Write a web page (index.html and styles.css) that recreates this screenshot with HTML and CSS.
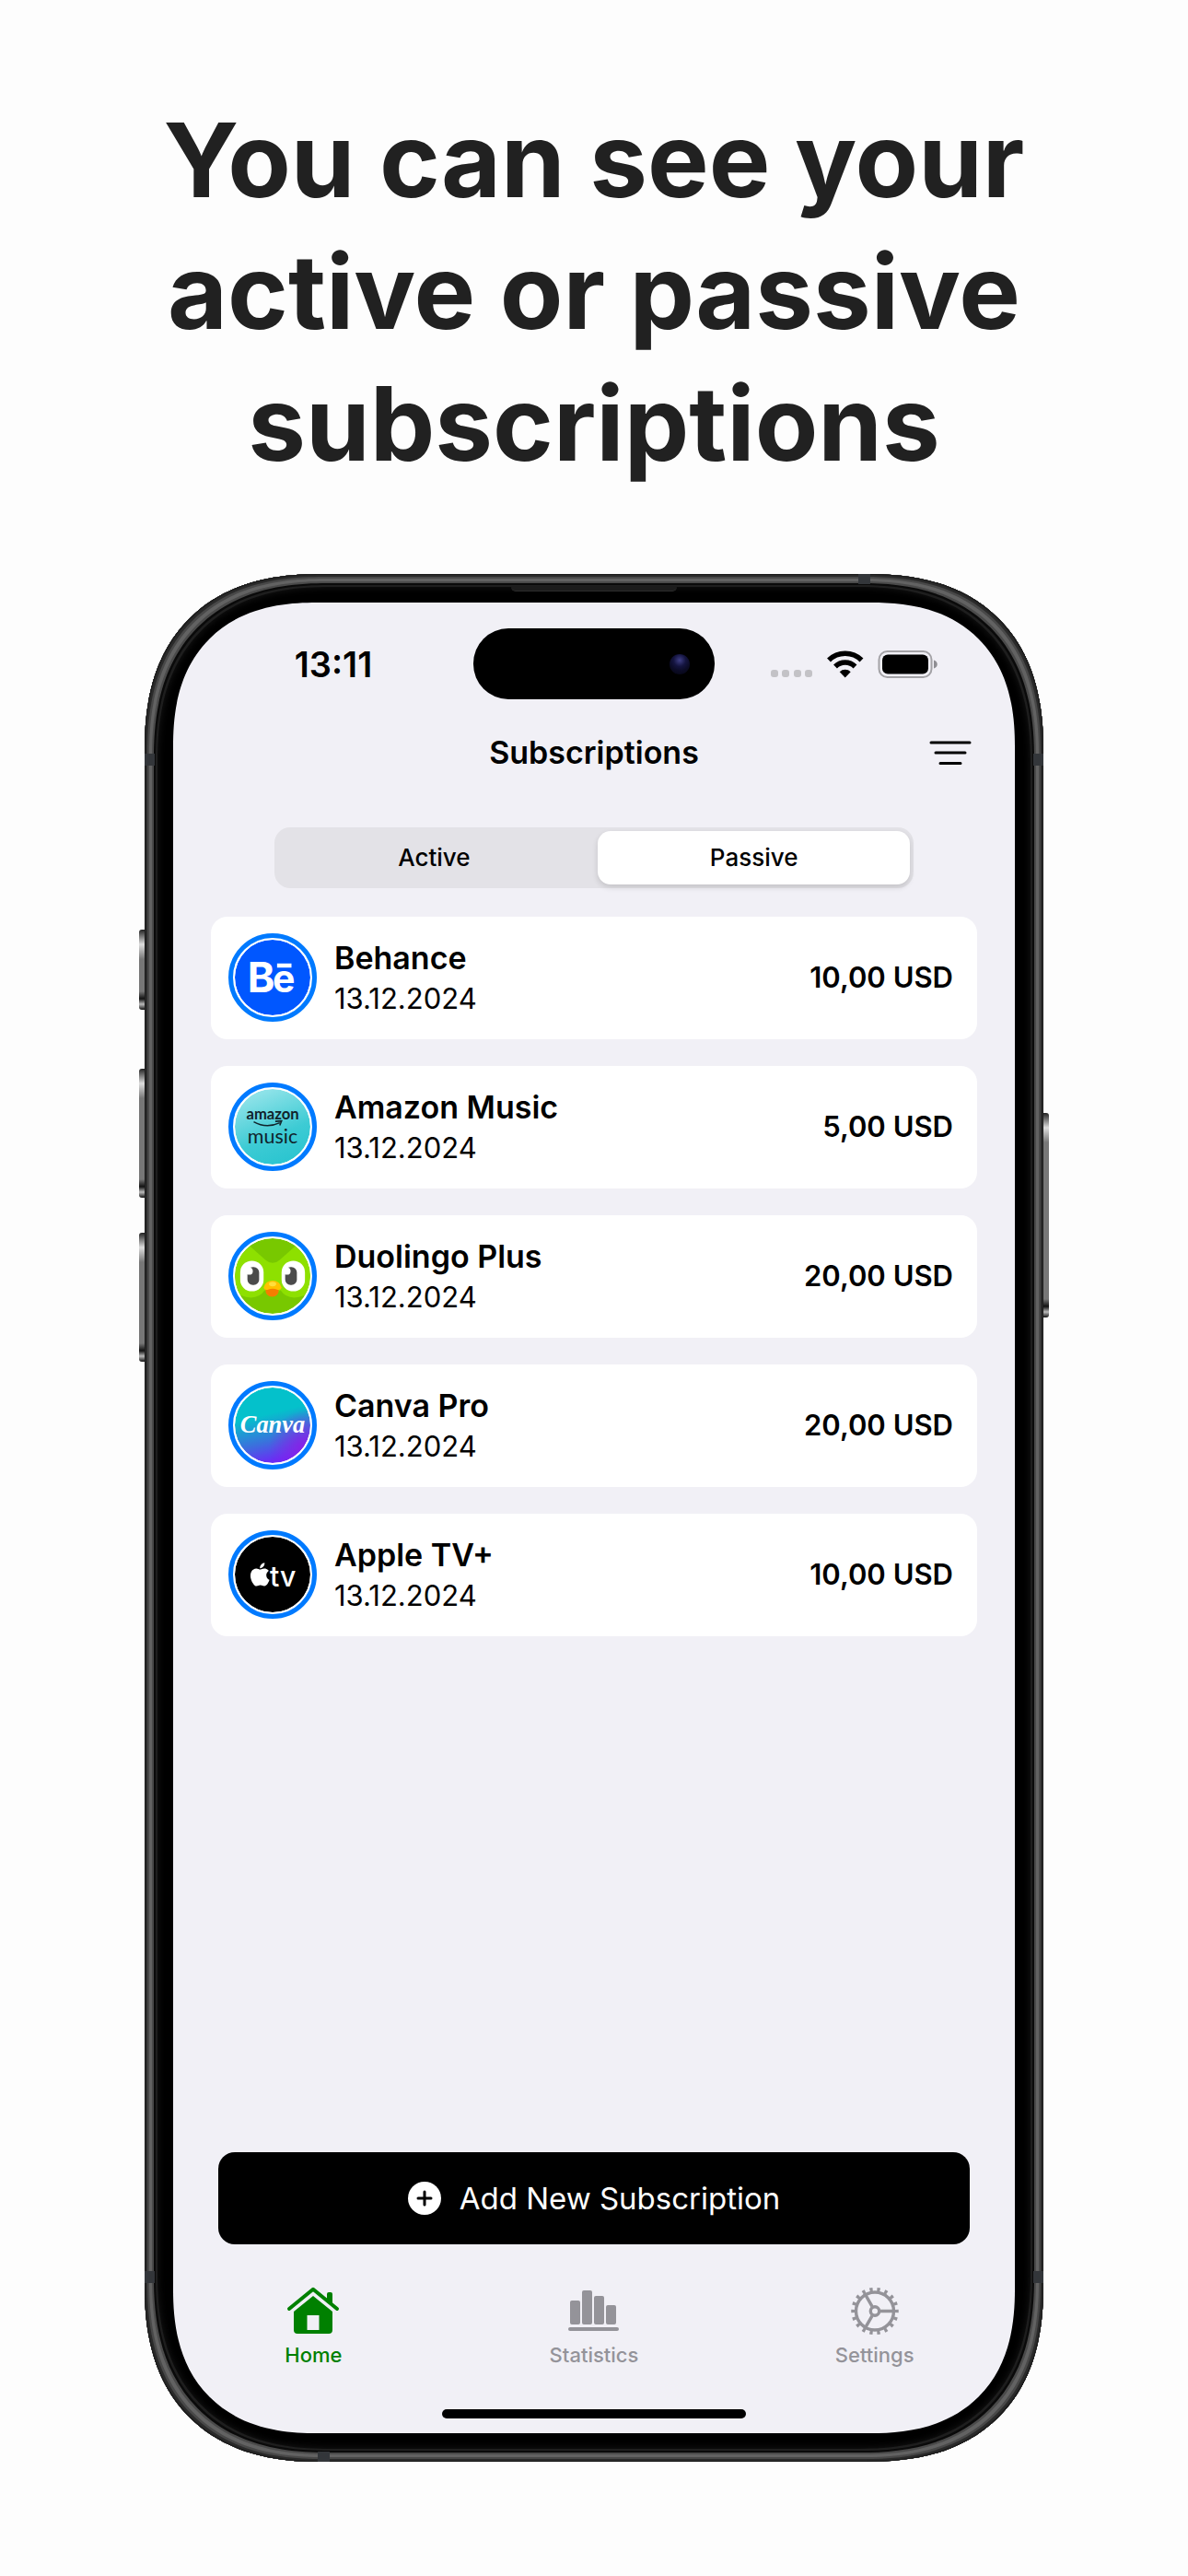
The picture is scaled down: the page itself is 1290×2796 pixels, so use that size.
FILE: index.html
```html
<!DOCTYPE html>
<html lang="en">
<head>
    <meta charset="UTF-8">
    <meta name="viewport" content="width=device-width, initial-scale=1">
    <title>Subscriptions</title>
    <link rel="stylesheet" href="styles.css">
</head>
<body>
    <h1 class="headline">You can see your<br>active or passive<br>subscriptions</h1>

    <div class="phone">
        <span class="side side-action"></span>
        <span class="side side-up"></span>
        <span class="side side-down"></span>
        <span class="side side-power"></span>
        <span class="band band-left-top"></span>
        <span class="band band-left-bottom"></span>
        <span class="band band-right-top"></span>
        <span class="band band-right-bottom"></span>
        <span class="band band-top"></span>
        <span class="band band-bottom"></span>
        <span class="speaker"></span>

        <main class="screen">
            <div class="status-bar">
                <span class="time">13:11</span>
                <div class="island"><span class="lens"></span></div>
                <svg class="status-icons" width="184" height="32" viewBox="0 0 184 32">
                    <g fill="#c3c2c6">
                        <rect x="0" y="22" width="8" height="8" rx="3"/>
                        <rect x="12" y="22" width="8" height="8" rx="3"/>
                        <rect x="25" y="22" width="8" height="8" rx="3"/>
                        <rect x="37" y="22" width="8" height="8" rx="3"/>
                    </g>
                    <g fill="none" stroke="#000" stroke-width="5.6">
                        <path d="M63 11.5a25.500 25.500 0 0 1 35.500 0"/>
                        <path d="M70 18.400a15.500 15.500 0 0 1 21.500 0"/>
                    </g>
                    <path d="M80.700 30.500l-6-6.300a8.700 8.700 0 0 1 12 0z"/>
                    <rect x="117.500" y="2" width="57" height="28" rx="9" fill="none" stroke="#a3a2a6" stroke-width="2"/>
                    <rect x="121" y="5.500" width="50" height="21" rx="6"/>
                    <path d="M177 11.500c5 1 5 8 0 9z" fill="#8f8e93"/>
                </svg>
            </div>

            <header class="nav-bar">
                <h2>Subscriptions</h2>
                <button class="filter" type="button" aria-label="Filter">
                    <svg width="46" height="28" viewBox="0 0 46 28" fill="none" stroke="#000" stroke-width="3" stroke-linecap="round">
                        <path d="M2 3h42M7 14h32M12 25.500h22"/>
                    </svg>
                </button>
            </header>

            <form class="segmented">
                <input type="radio" name="state" id="active">
                <label for="active">Active</label>
                <input type="radio" name="state" id="passive" checked>
                <label for="passive">Passive</label>
            </form>

            <ul class="list">
                <li class="card">
                    <svg class="logo" viewBox="0 0 84 84">
                        <circle cx="42" cy="42" r="42" fill="#0057ff"/>
                        <text x="14" y="58" font-size="46" font-weight="700">B</text>
                        <text x="42" y="58" font-size="42" font-weight="700">e</text>
                        <path d="M47 26.500h16v4.500H47z" fill="#fff"/>
                    </svg>
                    <div class="info">
                        <span class="name">Behance</span>
                        <span class="date">13.12.2024</span>
                    </div>
                    <span class="price">10,00 USD</span>
                </li>
                <li class="card">
                    <svg class="logo" viewBox="0 0 84 84">
                        <defs>
                            <linearGradient id="music" x1="0.200" y1="0" x2="0.600" y2="1">
                                <stop offset="0.100" stop-color="#8de2e8"/>
                                <stop offset="0.650" stop-color="#3dcbd4"/>
                                <stop offset="1" stop-color="#2bc5d0"/>
                            </linearGradient>
                        </defs>
                        <circle cx="42" cy="42" r="42" fill="url(#music)"/>
                        <text class="lato dark" x="42" y="34" font-size="17" font-weight="700" text-anchor="middle">amazon</text>
                        <path d="M21 36.500q14 8 29 1M45 36l7-.5-2 5" fill="none" stroke="#10232b" stroke-width="1.600"/>
                        <text class="lato dark" x="42" y="60" font-size="22" text-anchor="middle">music</text>
                    </svg>
                    <div class="info">
                        <span class="name">Amazon Music</span>
                        <span class="date">13.12.2024</span>
                    </div>
                    <span class="price">5,00 USD</span>
                </li>
                <li class="card">
                    <svg class="logo" viewBox="0 0 84 84">
                        <defs>
                            <clipPath id="round"><circle cx="42" cy="42" r="42"/></clipPath>
                        </defs>
                        <g clip-path="url(#round)">
                            <path d="M0 0h84v84H0z" fill="#78c800"/>
                            <path d="M0 22l17-13 17 15q8 7 16 0L67 9l17 13v36q-6 8-18 8-10 0-15-8-9 6-18 0-5 8-15 8Q6 66 0 58z" fill="#8ee000"/>
                            <rect x="6" y="25" width="26" height="34" rx="13" fill="#fff"/>
                            <rect x="52" y="25" width="26" height="34" rx="13" fill="#fff"/>
                            <rect x="14" y="32" width="13" height="20" rx="6" fill="#4b4b4b"/>
                            <rect x="56" y="32" width="13" height="20" rx="6" fill="#4b4b4b"/>
                            <circle cx="16" cy="36.500" r="4" fill="#fff"/>
                            <circle cx="58" cy="36.500" r="4" fill="#fff"/>
                            <path d="M34 56q8-6 15 0 0 9-7.500 9T34 56z" fill="#f47d00"/>
                            <path d="M32 55q2-8 10-8t10 8q-1 3-5 2-5-2-10 0-4 1-5-2z" fill="#ffc200"/>
                            <ellipse cx="42" cy="51" rx="4" ry="2.500" fill="#ffde3d"/>
                        </g>
                    </svg>
                    <div class="info">
                        <span class="name">Duolingo Plus</span>
                        <span class="date">13.12.2024</span>
                    </div>
                    <span class="price">20,00 USD</span>
                </li>
                <li class="card">
                    <svg class="logo" viewBox="0 0 84 84">
                        <defs>
                            <linearGradient id="canva" x1="0.350" y1="0" x2="0.600" y2="1">
                                <stop offset="0.350" stop-color="#04c1cb"/>
                                <stop offset="0.700" stop-color="#3b70dd"/>
                                <stop offset="0.950" stop-color="#6a2cf5"/>
                            </linearGradient>
                            <radialGradient id="violet" cx="0.950" cy="0.800" r="0.500">
                                <stop offset="0" stop-color="#8a1fe6"/>
                                <stop offset="1" stop-color="#8a1fe6" stop-opacity="0"/>
                            </radialGradient>
                        </defs>
                        <circle cx="42" cy="42" r="42" fill="url(#canva)"/>
                        <circle cx="42" cy="42" r="42" fill="url(#violet)"/>
                        <text class="script" x="42" y="50" font-size="27" font-weight="700" text-anchor="middle">Canva</text>
                    </svg>
                    <div class="info">
                        <span class="name">Canva Pro</span>
                        <span class="date">13.12.2024</span>
                    </div>
                    <span class="price">20,00 USD</span>
                </li>
                <li class="card">
                    <svg class="logo" viewBox="0 0 84 84">
                        <circle cx="42" cy="42" r="42"/>
                        <path transform="translate(15 29) scale(1.080)" fill="#fff" d="M12.152 6.896c-.948 0-2.415-1.078-3.960-1.040-2.040.027-3.910 1.183-4.961 3.014-2.117 3.675-.546 9.103 1.519 12.090 1.013 1.454 2.208 3.090 3.792 3.039 1.520-.065 2.090-.987 3.935-.987 1.831 0 2.350.987 3.960.948 1.637-.026 2.676-1.480 3.676-2.948 1.156-1.688 1.636-3.325 1.662-3.415-.039-.013-3.182-1.221-3.220-4.857-.026-3.040 2.480-4.494 2.597-4.559-1.429-2.090-3.623-2.324-4.390-2.376-2-.156-3.675 1.090-4.610 1.090zM15.530 3.830c.843-1.012 1.400-2.427 1.245-3.830-1.207.052-2.662.805-3.532 1.818-.780.896-1.454 2.338-1.273 3.714 1.338.104 2.715-.688 3.559-1.701"/>
                        <text x="39" y="55" font-size="31" font-weight="500">tv</text>
                    </svg>
                    <div class="info">
                        <span class="name">Apple TV+</span>
                        <span class="date">13.12.2024</span>
                    </div>
                    <span class="price">10,00 USD</span>
                </li>
            </ul>

            <button class="add" type="button">
                <svg width="36" height="36" viewBox="0 0 36 36">
                    <circle cx="18" cy="18" r="18" fill="#fff"/>
                    <path d="M18 11v14M11 18h14" stroke="#000" stroke-width="3" stroke-linecap="round"/>
                </svg>
                Add New Subscription
            </button>

            <nav class="tabs">
                <a class="tab current" href="#home">
                    <svg width="58" height="54" viewBox="0 0 58 54" fill="currentColor">
                        <path d="M44 16V8q0-2 2-2h2q2 0 2 2v13z"/>
                        <path d="M3 24L29 2.700 55 24" fill="none" stroke="currentColor" stroke-width="4" stroke-linecap="round" stroke-linejoin="round"/>
                        <path d="M8 27L29 10l21 17v20q0 4-4 4H12q-4 0-4-4zM22.500 31v16h13V31z" fill-rule="evenodd"/>
                    </svg>
                    Home
                </a>
                <a class="tab" href="#statistics">
                    <svg width="58" height="54" viewBox="0 0 58 54" fill="currentColor">
                        <rect x="3" y="15" width="11" height="26" rx="2"/>
                        <rect x="16" y="4" width="11" height="37" rx="2"/>
                        <rect x="29" y="10" width="11" height="31" rx="2"/>
                        <rect x="42" y="20" width="11" height="21" rx="2"/>
                        <rect x="1" y="44" width="55" height="4" rx="2"/>
                    </svg>
                    Statistics
                </a>
                <a class="tab" href="#settings">
                    <svg width="58" height="54" viewBox="0 0 58 54" fill="none" stroke="currentColor" stroke-width="3.400">
                        <circle cx="29" cy="26.500" r="20.500"/>
                        <circle cx="29" cy="26.500" r="23.500" stroke-width="4.500" pathLength="180" stroke-dasharray="4 6" stroke-dashoffset="2"/>
                        <circle cx="29" cy="26.500" r="4.700"/>
                        <path d="M35 26.500h14M26 21.300L18.800 8.800M26 31.700l-7.200 12.500"/>
                    </svg>
                    Settings
                </a>
            </nav>
            <div class="home-bar"></div>
        </main>
    </div>
</body>
</html>
```

FILE: styles.css
```css
* {
    box-sizing: border-box;
}

body {
    margin: 0;
    padding: 102px 12% 124px;
    background: #fdfdfd;
    font-family: Inter, "Liberation Sans", sans-serif;
    color: #000;
    display: flex;
    flex-direction: column;
    align-items: center;
}

.headline {
    margin: 0 0 92px;
    font-size: 112px;
    line-height: 143px;
    font-weight: 700;
    text-align: center;
    white-space: nowrap;
    color: #212121;
}

/* phone body */
.phone {
    position: relative;
    display: flex;
    width: 100%;
    max-width: 976px;
    aspect-ratio: 976 / 2049;
    padding: 31px;
    border-radius: 168px;
    background: #000;
    box-shadow:
        inset 0 0 0 1px #1c1c1c,
        inset 0 0 0 3px #2a2a2a,
        inset 0 0 0 5px #484848,
        inset 0 0 0 8px #626262,
        inset 0 0 0 10px #4a4a4a,
        inset 0 0 0 12px #0a0a0a,
        inset 0 0 0 14px #1e1e1e,
        inset 0 0 8px 14px #181818;
}

.side {
    position: absolute;
    left: -6px;
    width: 6px;
    border-radius: 3px 0 0 3px;
    background: linear-gradient(#222, #ddd 16px, #777 32px, #777 calc(100% - 20px), #111 calc(100% - 12px), #bbb calc(100% - 6px), #111);
}

.side-action {
    top: 386px;
    height: 87px;
}

.side-up {
    top: 537px;
    height: 140px;
}

.side-down {
    top: 715px;
    height: 140px;
}

.side-power {
    top: 585px;
    left: auto;
    right: -6px;
    height: 222px;
    border-radius: 0 3px 3px 0;
}

.band {
    position: absolute;
    width: 11px;
    height: 13px;
    background: #33363a;
}

.band-left-top {
    left: 0;
    top: 195px;
}

.band-left-bottom {
    left: 0;
    bottom: 194px;
}

.band-right-top {
    right: 0;
    top: 195px;
}

.band-right-bottom {
    right: 0;
    bottom: 194px;
}

.band-top {
    width: 13px;
    height: 11px;
    top: 0;
    right: 188px;
}

.band-bottom {
    width: 13px;
    height: 11px;
    bottom: 0;
    left: 188px;
}

.speaker {
    position: absolute;
    top: 13px;
    left: 50%;
    width: 180px;
    height: 6px;
    margin-left: -90px;
    border-radius: 0 0 5px 5px;
    background: #1c1c1c;
    border-bottom: 1px solid #2c2c2c;
}

.screen {
    flex: 1;
    min-width: 0;
    display: flex;
    flex-direction: column;
    border-radius: 138px;
    background: #f1f0f6;
    overflow: hidden;
}

/* smoother corners where the browser has them */
@supports (corner-shape: superellipse(1.25)) {
    .phone {
        border-radius: 192px;
        corner-shape: superellipse(1.25);
    }

    .screen {
        border-radius: 156px;
        corner-shape: superellipse(1.25);
    }
}

.status-bar {
    display: grid;
    grid-template-columns: 1fr 262px 1fr;
    align-items: center;
    padding-top: 28px;
}

.time {
    justify-self: center;
    padding-left: 22px;
    font-size: 38px;
    line-height: 44px;
    font-weight: 600;
}

.island {
    height: 77px;
    border-radius: 38px;
    background: #000;
    display: flex;
    align-items: center;
    justify-content: flex-end;
    padding-right: 27px;
}

.lens {
    width: 22px;
    height: 22px;
    border-radius: 50%;
    background: radial-gradient(circle at 50% 30%, #3f3f86, #14143f 35%, #0b0b26 60%, #050510);
}

.status-icons {
    justify-self: center;
    margin-right: 20px;
}

.nav-bar {
    display: grid;
    grid-template-columns: 1fr auto 1fr;
    align-items: center;
    margin-top: 34px;
    padding-right: 47px;
}

.nav-bar h2 {
    grid-column: 2;
    margin: 0;
    padding-left: 47px;
    font-size: 34px;
    line-height: 48px;
    font-weight: 600;
}

.filter {
    justify-self: end;
    display: flex;
    padding: 0;
    border: 0;
    background: none;
}

.segmented {
    display: grid;
    grid-template-columns: 1fr 1fr;
    gap: 8px;
    width: 76%;
    margin: 57px auto 0;
    padding: 4px;
    border-radius: 17px;
    background: #e3e2e7;
}

.segmented input {
    position: absolute;
    opacity: 0;
}

.segmented label {
    border-radius: 14px;
    font-size: 26px;
    line-height: 58px;
    font-weight: 500;
    text-align: center;
}

.segmented input:checked + label {
    background: #fff;
    box-shadow: 0 3px 6px rgba(0, 0, 0, 0.14);
}

.list {
    flex: 1;
    display: flex;
    flex-direction: column;
    gap: 29px;
    margin: 31px 41px 0;
    padding: 0;
    list-style: none;
}

.card {
    display: flex;
    align-items: center;
    gap: 19px;
    padding: 18px 26px 19px 19px;
    border-radius: 18px;
    background: #fff;
}

.logo {
    flex: none;
    width: 96px;
    height: 96px;
    padding: 2px;
    border: 5px solid #007aff;
    border-radius: 50%;
}

.logo text {
    fill: #fff;
}

.logo .lato {
    font-family: Lato, sans-serif;
}

.logo .dark {
    fill: #10232b;
}

.logo .script {
    font-family: "Liberation Serif", serif;
    font-style: italic;
}

.info {
    flex: 1;
    display: flex;
    flex-direction: column;
}

.name {
    font-size: 34px;
    line-height: 46px;
    font-weight: 600;
}

.date {
    font-size: 31px;
    line-height: 42px;
}

.price {
    font-size: 31px;
    line-height: 42px;
    font-weight: 600;
}

.add {
    display: flex;
    align-items: center;
    justify-content: center;
    gap: 20px;
    margin: 0 49px;
    height: 100px;
    border: 0;
    border-radius: 18px;
    background: #000;
    color: #fff;
    font-family: inherit;
    font-size: 33px;
    font-weight: 400;
}

.tabs {
    display: grid;
    grid-template-columns: repeat(3, 1fr);
    margin-top: 46px;
}

.tab {
    display: flex;
    flex-direction: column;
    align-items: center;
    gap: 6px;
    font-size: 22px;
    line-height: 28px;
    font-weight: 500;
    text-decoration: none;
    color: #949399;
}

.tab.current {
    color: #008000;
}

.home-bar {
    width: 36%;
    height: 10px;
    margin: 45px auto 16px;
    border-radius: 5px;
    background: #000;
}
```
